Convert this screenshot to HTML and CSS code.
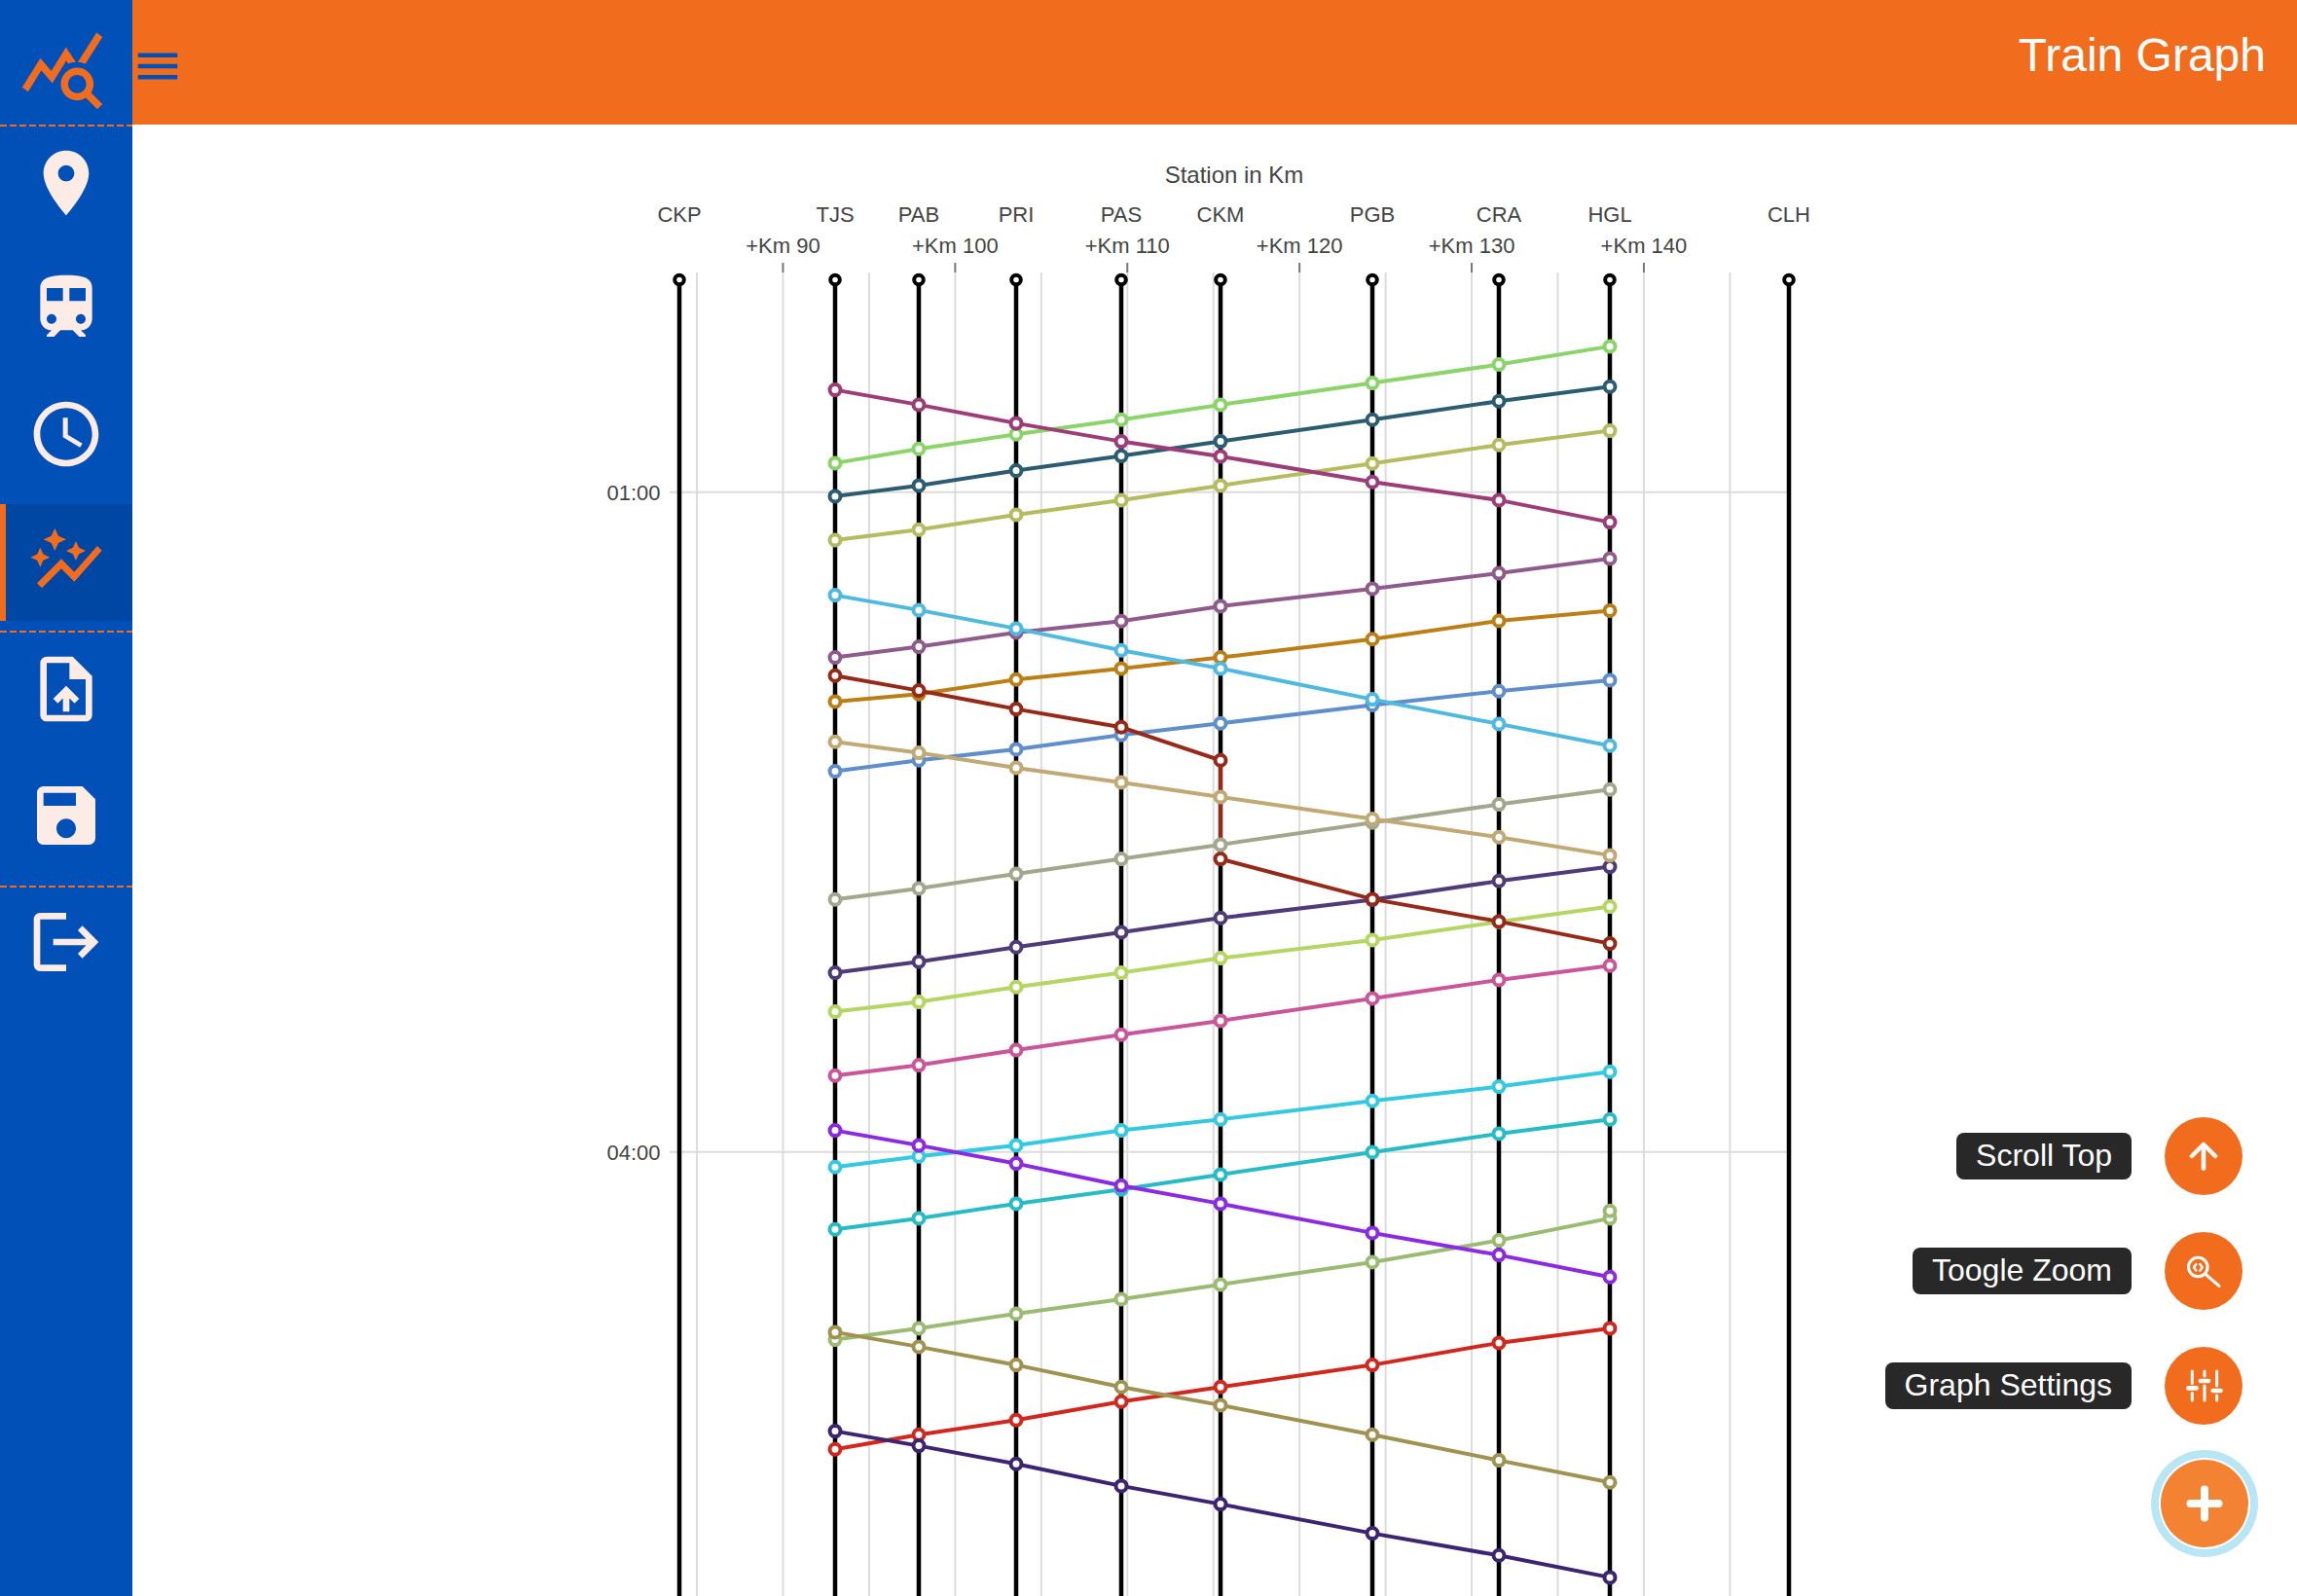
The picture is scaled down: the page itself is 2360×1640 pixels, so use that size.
FILE: index.html
```html
<!DOCTYPE html>
<html lang="en">
<head>
	<meta charset="UTF-8">
	<title>Train Graph</title>
	<link rel="stylesheet" href="styles.css">
</head>
<body>
	<div class="app">
		<aside class="sidebar">
			<div class="logo">
				<svg class="logo-icon" viewBox="0 0 24 24"><path d="M19.88 18.47c.44-.7.7-1.51.7-2.39 0-2.49-2.01-4.5-4.5-4.5s-4.5 2.01-4.5 4.5 2.01 4.5 4.5 4.5c.88 0 1.69-.26 2.39-.7L21.58 23 23 21.58l-3.12-3.11zm-3.8.11c-1.38 0-2.5-1.12-2.5-2.5s1.12-2.5 2.5-2.5 2.5 1.12 2.5 2.5-1.12 2.5-2.5 2.5zm-.36-8.5c-.74.02-1.45.18-2.1.45l-.55-.83-3.8 6.18-3.01-3.52-3.63 5.81L1 17l5-8 3 3.5L13 6l2.72 4.08zm2.59.5c-.64-.28-1.33-.45-2.05-.49L21.38 2 23 3.18l-4.69 7.4z"/></svg>
			</div>
			<div class="divider first"></div>
			<nav class="nav-group">
				<a class="nav-item"><svg viewBox="0 0 24 24"><path d="M12 2C8.13 2 5 5.13 5 9c0 5.25 7 13 7 13s7-7.75 7-13c0-3.87-3.13-7-7-7zm0 9.5c-1.38 0-2.5-1.12-2.5-2.5s1.12-2.5 2.5-2.5 2.5 1.12 2.5 2.5-1.12 2.5-2.5 2.5z"/></svg></a>
				<a class="nav-item"><svg viewBox="0 0.6 24 24"><path d="M12 2c-4 0-8 .5-8 4v9.5C4 17.43 5.57 19 7.5 19L6 20.5v.5h2.23l2-2H14l2 2h2v-.5L16.5 19c1.93 0 3.5-1.57 3.5-3.5V6c0-3.5-3.58-4-8-4zM7.5 17c-.83 0-1.5-.67-1.5-1.5S6.67 14 7.5 14s1.5.67 1.5 1.5S8.33 17 7.5 17zm3.5-7H6V6h5v4zm2 0V6h5v4h-5zm3.5 7c-.83 0-1.5-.67-1.5-1.5s.67-1.5 1.5-1.5 1.5.67 1.5 1.5-.67 1.5-1.5 1.5z"/></svg></a>
				<a class="nav-item"><svg viewBox="0 0.6 24 24"><path d="M11.99 2C6.47 2 2 6.48 2 12s4.47 10 9.99 10C17.52 22 22 17.52 22 12S17.52 2 11.99 2zM12 20c-4.42 0-8-3.58-8-8s3.58-8 8-8 8 3.58 8 8-3.58 8-8 8zm.5-13H11v6l5.25 3.15.75-1.23-4.5-2.67z"/></svg></a>
				<a class="nav-item active"><svg viewBox="0 0.6 24 24"><path d="M14.06 9.94 12 9l2.06-.94L15 6l.94 2.06L18 9l-2.06.94L15 12l-.94-2.06zM4 14l.94-2.06L7 11l-2.06-.94L4 8l-.94 2.06L1 11l2.06.94L4 14zm4.5-5 1.09-2.41L12 5.5 9.59 4.41 8.5 2 7.41 4.41 5 5.5l2.41 1.09L8.5 9zm-4 11.5 6-6.01 4 4L23 8.93l-1.41-1.41-7.09 7.97-4-4L3 19l1.5 1.5z"/></svg></a>
			</nav>
			<div class="divider"></div>
			<nav class="nav-group">
				<a class="nav-item"><svg viewBox="0 0.6 24 24"><path d="M14 2H6c-1.1 0-1.99.9-1.99 2L4 20c0 1.1.89 2 1.99 2H18c1.1 0 2-.9 2-2V8l-6-6zm4 18H6V4h7v5h5v11zM8 15.01l1.41 1.41L11 14.84V19h2v-4.16l1.59 1.59L16 15.01 12.01 11 8 15.01z"/></svg></a>
				<a class="nav-item"><svg viewBox="0 0.6 24 24"><path d="M17 3H5c-1.11 0-2 .9-2 2v14c0 1.1.89 2 2 2h14c1.1 0 2-.9 2-2V7l-4-4zm-5 16c-1.66 0-3-1.34-3-3s1.34-3 3-3 3 1.34 3 3-1.34 3-3 3zm3-10H5V5h10v4z"/></svg></a>
			</nav>
			<div class="divider"></div>
			<nav class="nav-group">
				<a class="nav-item"><svg viewBox="0 1.2 24 24"><path d="M17 7l-1.41 1.41L18.17 11H8v2h10.17l-2.58 2.58L17 17l5-5zM4 5h8V3H4c-1.1 0-2 .9-2 2v14c0 1.1.9 2 2 2h8v-2H4V5z"/></svg></a>
			</nav>
		</aside>

		<div class="page">
			<header class="topbar">
				<button class="menu-btn"><svg viewBox="0 0 24 24"><path d="M3 18h18v-2H3v2zm0-5h18v-2H3v2zm0-7v2h18V6H3z"/></svg></button>
				<h1 class="page-title">Train Graph</h1>
			</header>
			<main class="graph">
				<svg id="graph" viewBox="136 128 2224 1512"></svg>
			</main>
		</div>
	</div>

	<div class="speed-dial">
		<div class="dial-action">
			<span class="dial-label">Scroll Top</span>
			<button class="dial-btn"><svg width="44" height="44" viewBox="0 0 24 24" class="fill-icon"><path d="M13 19V7.83l4.88 4.88c.39.39 1.03.39 1.42 0 .39-.39.39-1.02 0-1.41l-6.59-6.59c-.39-.39-1.02-.39-1.41 0l-6.6 6.58c-.39.39-.39 1.02 0 1.41.39.39 1.02.39 1.41 0L11 7.83V19c0 .55.45 1 1 1s1-.45 1-1z"/></svg></button>
		</div>
		<div class="dial-action">
			<span class="dial-label">Toogle Zoom</span>
			<button class="dial-btn"><svg width="44" height="44" viewBox="-22 -22 44 44" class="line-icon">
				<circle cx="-5.7" cy="-4" r="9.8"/>
				<path d="M1.6 3 16 15.4"/>
				<path class="thin" d="M-7.6 -7 -10 -3.7 -7.6 -.4M-3.7 -7 -1.3 -3.7 -3.7 -.4"/>
			</svg></button>
		</div>
		<div class="dial-action">
			<span class="dial-label">Graph Settings</span>
			<button class="dial-btn"><svg width="44" height="44" viewBox="-22 -22 44 44" class="line-icon">
				<path d="M-11.7 -15V-2.6M-11.7 7.4V15M1 -15V-10M1 0V15M13.7 -15V0M13.7 10V15"/>
				<path class="slider" d="M-15.5 2.4H-7.5M-3 -5H5M9.7 5H17.5"/>
			</svg></button>
		</div>
		<button class="dial-main"><svg width="44" height="44" viewBox="-22 -22 44 44" class="line-icon plus"><path d="M-14.5 0H14.5M0 -14.5V14.5"/></svg></button>
	</div>

	<script src="graph.js"></script>
</body>
</html>
```

FILE: styles.css
```css
*{box-sizing:border-box;}
html,body{height:100%;margin:0;overflow:hidden;}
body{font-family:"Liberation Sans",Arial,sans-serif;color:#333;background:#fff;}
svg{display:block;}

.app{display:flex;height:100%;}

/* left rail */
.sidebar{flex:0 0 136px;background:#0050b8;}
.logo{height:128px;padding:26px 0 0 19px;}
.logo-icon{width:90px;height:90px;fill:#f26c1e;}
.divider{height:2px;background:repeating-linear-gradient(90deg,#f26c1e 0,#f26c1e 7px,transparent 7px,transparent 10px);}
.divider.first{margin-bottom:-2px;}
.nav-group{display:flex;flex-direction:column;gap:10px;padding-bottom:10px;}
.nav-item{display:flex;align-items:center;justify-content:center;height:120px;fill:#fdece6;}
.nav-item svg{width:80px;height:80px;}
.nav-item.active{background:#0047a3;border-left:6px solid #f26c1e;padding-right:6px;fill:#f26c1e;}

/* top bar */
.page{flex:1;display:flex;flex-direction:column;min-width:0;}
.topbar{flex:0 0 128px;display:flex;justify-content:space-between;align-items:flex-start;background:#f26c1e;padding:0 32px 0 0;}
.menu-btn{border:0;background:none;padding:0;margin:41px 0 0 -1px;fill:#0050b8;}
.menu-btn svg{width:54px;height:54px;}
.page-title{margin:29px 0 0;font-size:48px;font-weight:400;line-height:56px;color:#fff;}

/* graph */
.graph{flex:1;min-height:0;}
#graph{width:100%;height:100%;}
.grid{stroke:#dcdcdc;stroke-width:2;fill:none;}
.tick{stroke:#777;stroke-width:2;}
.station-line{stroke:#000;stroke-width:4.5;}
.station-dot{fill:#fff;stroke:#000;stroke-width:4;}
.train{fill:none;stroke-width:4;}
.train-dot{fill:#fff;stroke-width:4;}
.label{font-size:22px;fill:#444;text-anchor:middle;}
.label.time{text-anchor:end;}
.label.title{font-size:24px;}

/* floating actions */
.speed-dial{position:fixed;right:40px;bottom:40px;display:flex;flex-direction:column;align-items:flex-end;}
.dial-action{display:flex;align-items:center;gap:34px;height:80px;margin:0 16px 38px 0;}
.dial-action:nth-child(3){margin-bottom:26px;}
.dial-label{height:48px;line-height:47px;padding:0 20px;border-radius:8px;background:#282828;color:#fff;font-size:32px;white-space:nowrap;}
.dial-btn,.dial-main{display:flex;align-items:center;justify-content:center;padding:0;border:0;border-radius:50%;background:#f26c1e;}
.dial-btn{width:80px;height:80px;}
.dial-main{width:90px;height:90px;margin:10px;background:#f38332;box-shadow:0 0 0 2px #fff,0 0 0 10px #b9e6f5;}
.fill-icon{fill:#fff;stroke:#fff;stroke-width:.5;}
.line-icon{fill:none;stroke:#fff;stroke-width:3;stroke-linecap:round;stroke-linejoin:round;}
.line-icon .thin{stroke-width:2.4;}
.line-icon .slider{stroke-width:4.7;}
.line-icon.plus{stroke-width:8;}
```

FILE: graph.js
```js
window.onload = function(){
	var svg = document.getElementById('graph');
	var NS = 'http://www.w3.org/2000/svg';

	// stations, x is the page position
	var stations = [
		['CKP',698],['TJS',858],['PAB',944],['PRI',1044],['PAS',1152],
		['CKM',1254],['PGB',1410],['CRA',1540],['HGL',1654],['CLH',1838]
	];
	// the eight stations every train calls at
	var xs = [858,944,1044,1152,1254,1410,1540,1654];

	// draw order matters, later trains sit on top at the crossings
	var trains = [
		['#8bd46a',[475.3,460.7,445.7,430.7,415.3,393,374,355.3]],
		['#2b5c70',[509.3,498.3,483,468,453,430.7,411.7,396.7]],
		['#b5bc5f',[554.3,543.7,528.3,513.3,498.3,475.7,456.7,442]],
		['#8f5a8c',[675,664,649.3,637.7,622.3,604.3,588.5,573.4]],
		['#bb7f16',[720.3,712.7,697.7,686.3,675,656.2,637.4,626.8]],
		['#5f8ec9',[792,780.7,769.3,754.7,742.7,723.9,709.6,698.3]],
		['#4f3b78',[999,987.7,972.7,957.3,942.7,924,904.7,890]],
		['#b5d662',[1039,1029,1013.7,999,984,965.3,946.7,931]],
		['#c9559b',[1104.7,1094,1078.4,1062.7,1048.3,1025.3,1006.3,991.7]],
		['#35c9e0',[1198.7,1187.7,1176.3,1161,1149.7,1130.7,1116,1100.7]],
		['#27bcc5',[1262.7,1251.3,1236.3,1221.7,1206.3,1183.3,1164.3,1149.7]],
		['#9cbb72',[1376,1364.3,1349.3,1334.3,1319.3,1296.3,1274,1251.3],[[1654,1243.7]]],
		['#d0281f',[1488.7,1473.7,1458.7,1439.7,1424.7,1402,1379.3,1364.3]],
		['#9c3d7a',[400,415.3,434.3,453,468.3,494.7,513.3,536]],
		['#4fb9e0',[611,626.3,645.3,667.7,686.3,718,743.3,765.7]],
		['#962a18',[693.7,709,728,746.7,780.7,923.3,946.3,969],[[1254,882]]],
		['#a3a88d',[923.7,912.3,897.3,882,867.3,844.7,826,810.7]],
		['#c0a974',[761.7,773,788.3,803.3,818.3,841,859.7,878.3]],
		['#8a2be2',[1161,1176.3,1195,1217.7,1236.3,1266.3,1289,1311.7]],
		['#a09352',[1368.3,1383.3,1402,1424.7,1443.3,1473.7,1500,1522.7]],
		['#3d2470',[1470,1485,1503.7,1526.3,1545,1575,1597.7,1620.3]]
	];

	function add(name,attrs,txt){
		var el = document.createElementNS(NS,name);
		for(var k in attrs){
			el.setAttribute(k,attrs[k]);
		}
		if(txt){
			el.appendChild(document.createTextNode(txt));
		}
		svg.appendChild(el);
		return el;
	}

	function dot(x,y,color){
		add('circle',{'class':'train-dot',cx:x,cy:y+.6,r:5.5,stroke:color});
	}

	// vertical grid, every 5 km
	for(var i=0;i<13;i++){
		var gx = 716 + i*88.45;
		add('line',{'class':'grid',x1:gx,x2:gx,y1:280,y2:1640});
		if(i%2 === 1){
			add('line',{'class':'tick',x1:gx,x2:gx,y1:270,y2:280});
			add('text',{'class':'label',x:gx,y:260},'+Km '+(85+i*5));
		}
	}

	// time grid
	[[505.7,'01:00'],[1183.7,'04:00']].forEach(function(t){
		add('line',{'class':'grid',x1:688,x2:1836,y1:t[0],y2:t[0]});
		add('text',{'class':'label time',x:678.5,y:t[0]+8},t[1]);
	});

	add('text',{'class':'label title',x:1268,y:188},'Station in Km');

	stations.forEach(function(s){
		add('text',{'class':'label',x:s[1],y:228},s[0]);
		add('line',{'class':'station-line',x1:s[1],x2:s[1],y1:287,y2:1640});
		add('circle',{'class':'station-dot',cx:s[1],cy:287.5,r:4.8});
	});

	trains.forEach(function(t){
		var color = t[0];
		var ys = t[1];
		var extra = t[2] || [];
		var pts = [];
		xs.forEach(function(x,n){
			pts.push(x+','+(ys[n]+.6));
			// the halt at CKM runs the line straight down
			if(color === '#962a18' && n === 4){
				pts.push('1254,882.6');
			}
		});
		add('polyline',{'class':'train',points:pts.join(' '),stroke:color});
		xs.forEach(function(x,n){
			dot(x,ys[n],color);
		});
		extra.forEach(function(p){
			dot(p[0],p[1],color);
		});
	});
};
```
